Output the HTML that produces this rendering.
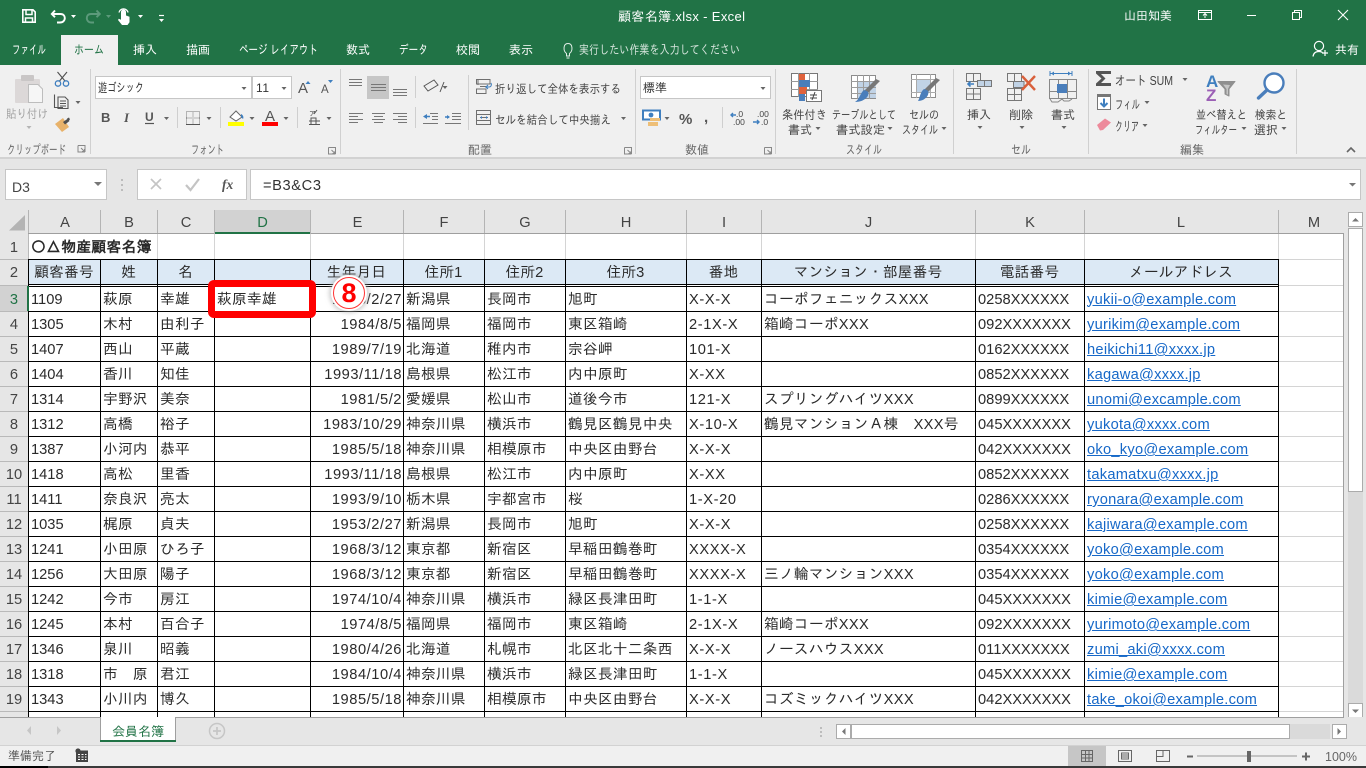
<!DOCTYPE html>
<html lang="ja"><head><meta charset="utf-8"><title>顧客名簿.xlsx - Excel</title>
<style>
html,body{margin:0;padding:0;width:1366px;height:768px;overflow:hidden;background:#e6e6e6}
body{position:relative;font-family:"Liberation Sans","IPAGothic","Noto Sans CJK JP",sans-serif}
svg{position:absolute;left:0;top:0;display:block}
svg text{font-family:"Liberation Sans","IPAGothic","Noto Sans CJK JP",sans-serif;font-size:12px;fill:#444}
#sheet{position:absolute;left:0;top:234px;width:1344px;height:483px;overflow:hidden;background:#fff}
#grid{left:0;top:-234px}
table{position:absolute;left:0;top:2px;border-collapse:collapse;table-layout:fixed;width:1344px;font-size:14.67px;color:#2a2a2a;letter-spacing:.3px}
td{padding:0 0 0 3px;height:25px;line-height:25px;white-space:nowrap;overflow:visible;box-sizing:border-box}
tr.h1 td{height:24px;line-height:23px}
tr.h2 td{height:27px;line-height:25px;text-align:center;padding:0;letter-spacing:.2px}
tr.h3 td{height:26px;line-height:25px}
td.r{text-align:center;padding:0;color:#444;letter-spacing:0}
tr.h3 td.r{padding:0}
td.s{color:#217346}
td.n{letter-spacing:0}
td.d{text-align:right;padding:0 1px 0 0;letter-spacing:.55px}
td.t{letter-spacing:0}
td.m{color:#1668c8;letter-spacing:.25px}
td.m span{text-decoration:underline}
td.x{letter-spacing:.6px}
b{font-weight:bold;letter-spacing:.45px}
#red{position:absolute;left:208px;top:280px;width:94px;height:24px;border:7px solid #f00;border-radius:6px;background:transparent;box-sizing:content-box}
#eight{position:absolute;left:331px;top:275px;width:36px;height:36px;border-radius:50%;background:#fff;box-shadow:0 0 4px 2px rgba(170,170,170,.55)}
#eight i{position:absolute;left:2px;top:2px;width:30px;height:30px;border:1px solid #f33;border-radius:50%;font:bold 27px/31px "Liberation Sans",sans-serif;color:#f00;text-align:center}
</style></head><body>

<div id="sheet">
<svg id="grid" width="1344" height="768">
<rect x="0" y="234" width="28" height="483" fill="#e6e6e6"/>
<rect x="0" y="286" width="28" height="25" fill="#d2d2d2"/>
<rect x="29" y="260" width="1249" height="24" fill="#dce9f5"/>
<path d="M157.5 234V259M214.5 234V259M310.5 234V259M403.5 234V259M484.5 234V259M565.5 234V259M686.5 234V259M761.5 234V259M975.5 234V259M1084.5 234V259M1278.5 234V259M1279 259.5H1344M1279 285.5H1344M1279 311.5H1344M1279 336.5H1344M1279 361.5H1344M1279 386.5H1344M1279 411.5H1344M1279 436.5H1344M1279 461.5H1344M1279 486.5H1344M1279 511.5H1344M1279 536.5H1344M1279 561.5H1344M1279 586.5H1344M1279 611.5H1344M1279 636.5H1344M1279 661.5H1344M1279 686.5H1344M1279 711.5H1344" stroke="#d4d4d4" fill="none"/>
</svg>
<table>
<colgroup><col style="width:28px"><col style="width:72px"><col style="width:57px"><col style="width:57px"><col style="width:96px"><col style="width:93px"><col style="width:81px"><col style="width:81px"><col style="width:121px"><col style="width:75px"><col style="width:214px"><col style="width:109px"><col style="width:194px"><col style="width:66px"></colgroup>
<tr class="h1"><td class="r">1</td><td colspan="3"><b>〇△物産顧客名簿</b></td><td></td><td></td><td></td><td></td><td></td><td></td><td></td><td></td><td></td><td></td></tr>
<tr class="h2"><td class="r">2</td><td>顧客番号</td><td>姓</td><td>名</td><td></td><td>生年月日</td><td>住所1</td><td>住所2</td><td>住所3</td><td>番地</td><td>マンション・部屋番号</td><td>電話番号</td><td>メールアドレス</td><td></td></tr>
<tr class="h3"><td class="r s">3</td><td class="n">1109</td><td>萩原</td><td>幸雄</td><td>萩原幸雄</td><td class="d">1953/2/27</td><td>新潟県</td><td>長岡市</td><td>旭町</td><td class="x">X-X-X</td><td>コーポフェニックスXXX</td><td class="t">0258XXXXXX</td><td class="m"><span>yukii-o@example.com</span></td><td></td></tr>
<tr><td class="r">4</td><td class="n">1305</td><td>木村</td><td>由利子</td><td></td><td class="d">1984/8/5</td><td>福岡県</td><td>福岡市</td><td>東区箱崎</td><td class="x">2-1X-X</td><td>箱崎コーポXXX</td><td class="t">092XXXXXXX</td><td class="m"><span>yurikim@example.com</span></td><td></td></tr>
<tr><td class="r">5</td><td class="n">1407</td><td>西山</td><td>平蔵</td><td></td><td class="d">1989/7/19</td><td>北海道</td><td>稚内市</td><td>宗谷岬</td><td class="x">101-X</td><td></td><td class="t">0162XXXXXX</td><td class="m"><span>heikichi11@xxxx.jp</span></td><td></td></tr>
<tr><td class="r">6</td><td class="n">1404</td><td>香川</td><td>知佳</td><td></td><td class="d">1993/11/18</td><td>島根県</td><td>松江市</td><td>内中原町</td><td class="x">X-XX</td><td></td><td class="t">0852XXXXXX</td><td class="m"><span>kagawa@xxxx.jp</span></td><td></td></tr>
<tr><td class="r">7</td><td class="n">1314</td><td>宇野沢</td><td>美奈</td><td></td><td class="d">1981/5/2</td><td>愛媛県</td><td>松山市</td><td>道後今市</td><td class="x">121-X</td><td>スプリングハイツXXX</td><td class="t">0899XXXXXX</td><td class="m"><span>unomi@excample.com</span></td><td></td></tr>
<tr><td class="r">8</td><td class="n">1312</td><td>高橋</td><td>裕子</td><td></td><td class="d">1983/10/29</td><td>神奈川県</td><td>横浜市</td><td>鶴見区鶴見中央</td><td class="x">X-10-X</td><td>鶴見マンションＡ棟　XXX号</td><td class="t">045XXXXXXX</td><td class="m"><span>yukota@xxxx.com</span></td><td></td></tr>
<tr><td class="r">9</td><td class="n">1387</td><td>小河内</td><td>恭平</td><td></td><td class="d">1985/5/18</td><td>神奈川県</td><td>相模原市</td><td>中央区由野台</td><td class="x">X-X-X</td><td></td><td class="t">042XXXXXXX</td><td class="m"><span>oko_kyo@example.com</span></td><td></td></tr>
<tr><td class="r">10</td><td class="n">1418</td><td>高松</td><td>里香</td><td></td><td class="d">1993/11/18</td><td>島根県</td><td>松江市</td><td>内中原町</td><td class="x">X-XX</td><td></td><td class="t">0852XXXXXX</td><td class="m"><span>takamatxu@xxxx.jp</span></td><td></td></tr>
<tr><td class="r">11</td><td class="n">1411</td><td>奈良沢</td><td>亮太</td><td></td><td class="d">1993/9/10</td><td>栃木県</td><td>宇都宮市</td><td>桜</td><td class="x">1-X-20</td><td></td><td class="t">0286XXXXXX</td><td class="m"><span>ryonara@example.com</span></td><td></td></tr>
<tr><td class="r">12</td><td class="n">1035</td><td>梶原</td><td>貞夫</td><td></td><td class="d">1953/2/27</td><td>新潟県</td><td>長岡市</td><td>旭町</td><td class="x">X-X-X</td><td></td><td class="t">0258XXXXXX</td><td class="m"><span>kajiwara@example.com</span></td><td></td></tr>
<tr><td class="r">13</td><td class="n">1241</td><td>小田原</td><td>ひろ子</td><td></td><td class="d">1968/3/12</td><td>東京都</td><td>新宿区</td><td>早稲田鶴巻町</td><td class="x">XXXX-X</td><td></td><td class="t">0354XXXXXX</td><td class="m"><span>yoko@example.com</span></td><td></td></tr>
<tr><td class="r">14</td><td class="n">1256</td><td>大田原</td><td>陽子</td><td></td><td class="d">1968/3/12</td><td>東京都</td><td>新宿区</td><td>早稲田鶴巻町</td><td class="x">XXXX-X</td><td>三ノ輪マンションXXX</td><td class="t">0354XXXXXX</td><td class="m"><span>yoko@example.com</span></td><td></td></tr>
<tr><td class="r">15</td><td class="n">1242</td><td>今市</td><td>房江</td><td></td><td class="d">1974/10/4</td><td>神奈川県</td><td>横浜市</td><td>緑区長津田町</td><td class="x">1-1-X</td><td></td><td class="t">045XXXXXXX</td><td class="m"><span>kimie@example.com</span></td><td></td></tr>
<tr><td class="r">16</td><td class="n">1245</td><td>本村</td><td>百合子</td><td></td><td class="d">1974/8/5</td><td>福岡県</td><td>福岡市</td><td>東区箱崎</td><td class="x">2-1X-X</td><td>箱崎コーポXXX</td><td class="t">092XXXXXXX</td><td class="m"><span>yurimoto@example.com</span></td><td></td></tr>
<tr><td class="r">17</td><td class="n">1346</td><td>泉川</td><td>昭義</td><td></td><td class="d">1980/4/26</td><td>北海道</td><td>札幌市</td><td>北区北十二条西</td><td class="x">X-X-X</td><td>ノースハウスXXX</td><td class="t">011XXXXXXX</td><td class="m"><span>zumi_aki@xxxx.com</span></td><td></td></tr>
<tr><td class="r">18</td><td class="n">1318</td><td>市　原</td><td>君江</td><td></td><td class="d">1984/10/4</td><td>神奈川県</td><td>横浜市</td><td>緑区長津田町</td><td class="x">1-1-X</td><td></td><td class="t">045XXXXXXX</td><td class="m"><span>kimie@example.com</span></td><td></td></tr>
<tr><td class="r">19</td><td class="n">1343</td><td>小川内</td><td>博久</td><td></td><td class="d">1985/5/18</td><td>神奈川県</td><td>相模原市</td><td>中央区由野台</td><td class="x">X-X-X</td><td>コズミックハイツXXX</td><td class="t">042XXXXXXX</td><td class="m"><span>take_okoi@example.com</span></td><td></td></tr>
</table>
<svg width="1344" height="483" viewBox="0 234 1344 483">
<path d="M28.5 259V717M100.5 259V717M157.5 259V717M214.5 259V717M310.5 259V717M403.5 259V717M484.5 259V717M565.5 259V717M686.5 259V717M761.5 259V717M975.5 259V717M1084.5 259V717M1278.5 259V717M28 259.5H1279M28 284.5H1279M28 286.5H1279M28 311.5H1279M28 336.5H1279M28 361.5H1279M28 386.5H1279M28 411.5H1279M28 436.5H1279M28 461.5H1279M28 486.5H1279M28 511.5H1279M28 536.5H1279M28 561.5H1279M28 586.5H1279M28 611.5H1279M28 636.5H1279M28 661.5H1279M28 686.5H1279M28 711.5H1279" stroke="#000" fill="none"/>
<path d="M0 259.5H28M0 285.5H28M0 311.5H28M0 336.5H28M0 361.5H28M0 386.5H28M0 411.5H28M0 436.5H28M0 461.5H28M0 486.5H28M0 511.5H28M0 536.5H28M0 561.5H28M0 586.5H28M0 611.5H28M0 636.5H28M0 661.5H28M0 686.5H28M0 711.5H28M28.5 234V259" stroke="#b9b9b9" fill="none"/>
<rect x="27" y="286" width="2" height="25" fill="#217346"/>
<path d="M1343.5 234V717" stroke="#9f9f9f" fill="none"/>
</svg>
</div>

<div id="red"></div>
<div id="eight"><i>8</i></div>

<svg width="1366" height="768" viewBox="0 0 1366 768" style="pointer-events:none">
<!-- title + tabs -->
<rect width="1366" height="65" fill="#217346"/>
<rect x="61" y="35" width="57" height="30" fill="#f0f0f0"/>
<rect y="65" width="1366" height="93" fill="#f0f0f0"/>
<rect y="157" width="1366" height="2" fill="#d2d2d2"/>
<rect y="159" width="1366" height="51" fill="#e6e6e6"/>
<!-- QAT -->
<g fill="none" stroke="#fff" stroke-width="1.6">
<path d="M22.8 9.8H33L35.2 12V22.2H22.8Z"/>
<path d="M26 10V14.5H32V10M25.5 22V18H32.5V22" stroke-width="1.5"/>
<path d="M55 10.5L51.8 14L55 17.2M52.5 14H60.5C63.5 14 64.8 16 64.8 18C64.8 20.5 63 22.5 60 22.5H57" stroke-width="1.9"/>
<path d="M96.5 10.5L99.8 14L96.5 17.2M99 14H91C88 14 86.8 16 86.8 18C86.8 20.5 88.5 22.5 91.5 22.5H94" stroke="#5c9a7b" stroke-width="1.9"/>
</g>
<path d="M121 12a2.5 2.5 0 0 1 5 0v3.5l3.5 1.2v5.6l-2 2.7h-5.5l-4-5 .8-1.2 2.2 1z" fill="#fff"/>
<path d="M119 12.5a4.6 4.6 0 0 1 9 0" fill="none" stroke="#fff" stroke-width="1.3"/>
<path d="M71 15h5l-2.5 3zM138 15h5l-2.5 3zM159 19h5l-2.5 3z" fill="#fff"/>
<path d="M159 15.5h5" stroke="#fff" stroke-width="1.2"/>
<path d="M106 15h5l-2.5 3z" fill="#5c9a7b"/>
<!-- window controls -->
<g fill="none" stroke="#fff">
<path d="M1198.5 10.5H1211.5V19.5H1198.5ZM1198.5 12.5H1211.5M1205 18V14M1203 15.5L1205 13.5L1207 15.5"/>
<path d="M1247 15.5H1256"/>
<path d="M1292.5 12.5H1299.5V19.5H1292.5ZM1294.5 12.5V10.5H1301.5V17.5H1299.5"/>
<path d="M1338 10L1348 20M1348 10L1338 20" stroke-width="1.1"/>
<circle cx="1319" cy="46" r="4.6" stroke-width="1.2"/>
<path d="M1313 56.5C1313.5 53 1315.5 51.5 1319 51.5C1320.5 51.5 1321.5 51.8 1322.5 52.5M1325 50V56M1322 53H1328" stroke-width="1.2"/>
</g>
<text x="618" y="21" textLength="127" lengthAdjust="spacing" style="fill:#fff;font-size:13px">顧客名簿.xlsx  -  Excel</text>
<text x="1124" y="20" textLength="48" style="fill:#fff">山田知美</text>
<g style="fill:#fff">
<text x="12" y="54" textLength="34" lengthAdjust="spacingAndGlyphs" style="fill:#fff;font-size:12.5px">ファイル</text>
<text x="74" y="54" textLength="30" lengthAdjust="spacingAndGlyphs" style="fill:#217346;font-size:12.5px">ホーム</text>
<text x="133" y="54" textLength="24" style="fill:#fff">挿入</text>
<text x="186" y="54" textLength="24" style="fill:#fff">描画</text>
<text x="239" y="54" textLength="79" lengthAdjust="spacingAndGlyphs" style="fill:#fff;font-size:12.5px">ページ レイアウト</text>
<text x="346" y="54" textLength="24" style="fill:#fff">数式</text>
<text x="399" y="54" textLength="29" lengthAdjust="spacingAndGlyphs" style="fill:#fff;font-size:12.5px">データ</text>
<text x="456" y="54" textLength="24" style="fill:#fff">校閲</text>
<text x="509" y="54" textLength="24" style="fill:#fff">表示</text>
<text x="579" y="54" textLength="161" lengthAdjust="spacingAndGlyphs" style="fill:#d3e3da;font-size:12.5px">実行したい作業を入力してください</text>
<text x="1335" y="54" textLength="24" style="fill:#fff">共有</text>
</g>
<path d="M566.5 56V53.5C563 51 563 43.5 568 43.5C573 43.5 573 51 569.5 53.5V56ZM566.5 58H569.5" fill="none" stroke="#e3efe8" stroke-width="1"/>

<!-- group separators -->
<path d="M90.5 69V154M340.5 69V154M635.5 69V154M775.5 69V154M953.5 69V154M1088.5 69V154M1296.5 69V154M468.5 75V130" stroke="#d0d0d0" fill="none"/>
<path d="M177.5 107V128M220.5 107V128M297.5 107V128M415.5 76V98M415.5 107V128M722.5 107V128" stroke="#cfcfcf" fill="none"/>

<!-- clipboard -->
<rect x="15" y="79" width="25" height="24" rx="1" fill="#dcd8d8"/>
<rect x="21" y="75" width="13" height="6" rx="1" fill="#c9c6c6"/>
<path d="M28.5 84.5H38L42.5 89V102.5H28.5Z" fill="#f6f6f6" stroke="#bdbdbd"/>
<g fill="none" stroke="#4f4f4f" stroke-width="1.1">
<path d="M57.5 72L65 81M67 72L59.5 81"/>
<path d="M54.5 94.5V107.5H63M58 97V108.5H68V100L65 97Z" stroke="#555"/>
<path d="M60 101H66M60 103.5H66M60 106H66" stroke="#555"/>
</g>
<circle cx="58" cy="83.5" r="2.7" fill="none" stroke="#3f7fbf" stroke-width="1.3"/>
<circle cx="66" cy="83.5" r="2.7" fill="none" stroke="#3f7fbf" stroke-width="1.3"/>
<path d="M55 124L63 118L69 127L62 132Z" fill="#e8b26a"/>
<path d="M63 122L68 118.5L69.5 121L65 124.5ZM67 118.5L69 117.5L70 119.5L68.5 120.5Z" fill="#505050"/>
<text x="6" y="118" textLength="42" lengthAdjust="spacingAndGlyphs" style="fill:#a3a3a3">貼り付け</text>
<text x="7" y="154" textLength="59" lengthAdjust="spacingAndGlyphs" style="fill:#666;font-size:12.5px">クリップボード</text>
<text x="191" y="154" textLength="33" lengthAdjust="spacingAndGlyphs" style="fill:#666;font-size:12.5px">フォント</text>
<text x="468" y="154" textLength="24" style="fill:#666">配置</text>
<text x="685" y="154" textLength="24" style="fill:#666">数値</text>
<text x="846" y="154" textLength="36" lengthAdjust="spacingAndGlyphs" style="fill:#666;font-size:12.5px">スタイル</text>
<text x="1011" y="154" textLength="20" lengthAdjust="spacingAndGlyphs" style="fill:#666;font-size:12.5px">セル</text>
<text x="1180" y="154" textLength="24" style="fill:#666">編集</text>

<!-- font boxes -->
<g fill="#fff" stroke="#c6c6c6">
<rect x="95.5" y="76.5" width="156" height="22"/>
<rect x="252.5" y="76.5" width="39" height="22"/>
<rect x="640.5" y="76.5" width="130" height="22"/>
</g>
<text x="98" y="92" textLength="46" lengthAdjust="spacingAndGlyphs" style="fill:#333;font-size:12.5px">遊ゴシック</text>
<text x="256" y="92" textLength="13" style="fill:#333">11</text>
<text x="643" y="92" textLength="24" style="fill:#333">標準</text>
<text x="298" y="93" style="font-size:15px;fill:#555">A</text>
<text x="321" y="93" style="font-size:11.5px;fill:#555">A</text>
<path d="M305.5 84h5l-2.5-3zM328 80h5l-2.5 3z" fill="#3f7fbf"/>
<text x="101" y="122" style="font-weight:bold;font-size:13px;fill:#555">B</text>
<text x="124" y="122" style="font-family:'Liberation Serif';font-style:italic;font-weight:bold;font-size:13px;fill:#555">I</text>
<text x="145" y="121" style="font-weight:bold;font-size:12px;fill:#555">U</text>
<path d="M145 123.5h9" stroke="#555" stroke-width="1.2"/>
<path d="M186.5 111.5H199.5V124.5H186.5ZM193 111.5V124.5M186.5 118H199.5" fill="none" stroke="#777" stroke-width="1" stroke-dasharray="1 1"/>
<path d="M186 124.5H200" stroke="#555"/>
<path d="M230 117L236 111L242 117L236 121Z" fill="#fff" stroke="#666"/>
<path d="M241 114c2 1 3 3 2 5l-2-2z" fill="#3f7fbf"/>
<rect x="228" y="122" width="16" height="4" fill="#ff0"/>
<text x="265" y="121" style="font-size:15px;fill:#555">A</text>
<rect x="262" y="122" width="16" height="4" fill="#f00"/>
<text x="309" y="116" style="font-size:7px;fill:#444">ア</text>
<path d="M311 124v-6h5v6M316 118v6M309 121h11M309 124.5h11M317 110l-3 4" fill="none" stroke="#555"/>

<!-- alignment -->
<g fill="none" stroke="#777">
<rect x="367" y="76" width="22" height="23" fill="#c6c6c6" stroke="none"/>
<path d="M349 79.5H362M349 82.5H362M349 85.5H362M371 84.5H386M371 87.5H386M371 90.5H386M393 89.5H407M393 92.5H407M393 95.5H407"/>
<path d="M349 113.5H363M349 116.5H358M349 119.5H363M349 122.5H358M372 113.5H385M374 116.5H383M372 119.5H385M374 122.5H383M393 113.5H407M398 116.5H407M393 119.5H407M398 122.5H407"/>
<path d="M430 113.5H438M432 116.5H438M432 119.5H438M423 123.5H438M452 113.5H461M452 116.5H461M452 119.5H461M445 123.5H461"/>
<path d="M424 86L434 80L438 85L428 91ZM440 92L444 82" stroke="#555"/>
<path d="M478 79.5H489M478 79.5V85M476.5 79.5H490V84H476.5ZM476.5 89H486V93.5H476.5ZM480 86.5H486" stroke="#6f6f6f"/>
<path d="M476.5 110.5H490.5V124.5H476.5ZM476.5 114.5H490.5M476.5 120.5H490.5M480 117.5H488" stroke="#6f6f6f"/>
</g>
<path d="M423 116.5l4-2.5v5zM447 119l3-2-3-2zM480 117.5l2-1.5v3zM488 117.5l-2-1.5v3z" fill="#3f7fbf"/>
<path d="M430 116.5h-4M445 117h4" stroke="#3f7fbf" stroke-width="1.5"/>
<path d="M491 83c1 2 0 4-2 4h-3l2-2m-2 2l2 2" fill="none" stroke="#3f7fbf"/>
<text x="495" y="93" textLength="126" lengthAdjust="spacingAndGlyphs">折り返して全体を表示する</text>
<text x="495" y="124" textLength="116" lengthAdjust="spacingAndGlyphs">セルを結合して中央揃え</text>

<!-- number -->
<rect x="643" y="110.5" width="17" height="9" fill="#fff" stroke="#3f7fbf" stroke-width="2"/>
<circle cx="651" cy="115" r="2.4" fill="#3f7fbf"/>
<path d="M650 118h10v3h-10zM648 122h10v4h-10z" fill="#eebf77"/>
<text x="679" y="124" style="font-size:15px;font-weight:bold;fill:#555">%</text>
<text x="704" y="122" style="font-size:15px;font-weight:bold;fill:#555">,</text>
<text x="736" y="117" style="font-size:8.5px;fill:#444">.0</text>
<text x="733" y="125" style="font-size:8.5px;fill:#444">.00</text>
<text x="757" y="117" style="font-size:8.5px;fill:#444">.00</text>
<text x="761" y="125" style="font-size:8.5px;fill:#444">.0</text>
<path d="M736 115h-5M733 113l-2 2 2 2M753 122h6M757 120l2 2-2 2" fill="none" stroke="#3f7fbf" stroke-width="1.4"/>

<!-- styles: conditional -->
<rect x="791.5" y="73.5" width="26" height="23" fill="#fff" stroke="#777"/>
<path d="M791 81.5H818M791 89.5H818M798.5 73V97M809.5 73V97" stroke="#999" fill="none"/>
<rect x="799" y="74" width="6" height="7" fill="#e0623c"/>
<rect x="799" y="80" width="11" height="7" fill="#4a7ebb"/>
<rect x="799" y="87" width="8" height="7" fill="#e0623c"/>
<rect x="799" y="94" width="6" height="7" fill="#4a7ebb"/>
<rect x="806.5" y="90.5" width="15" height="11" fill="#fff" stroke="#777"/>
<path d="M810 95h7M810 98h7M812 100l3-8" stroke="#444" fill="none"/>
<!-- table -->
<rect x="851.5" y="75.5" width="24" height="23" fill="#fff" stroke="#8c8c8c"/>
<rect x="858" y="82" width="18" height="16" fill="#c1d3e6"/>
<path d="M851 81.5H876M851 87.5H876M851 93.5H876M857.5 75V99M863.5 75V99M869.5 75V99" stroke="#9c9c9c" fill="none"/>
<path d="M868 93L880 81L876 79L864 91Z" fill="#777"/>
<path d="M867 91C871 94 866 102 855 102C860 99 860 93 864 90Z" fill="#4a7ebb"/>
<!-- cell style -->
<rect x="911.5" y="74.5" width="24" height="23" fill="#fff" stroke="#8c8c8c"/>
<rect x="916" y="79" width="15" height="14" fill="#c1d3e6"/>
<path d="M911 79.5H936M911 92.5H936M916.5 74V98M930.5 74V98" stroke="#aaa" fill="none"/>
<path d="M928 92L940 80L936 78L924 90Z" fill="#777"/>
<path d="M927 90C931 93 926 101 918 101C920 98 920 92 924 89Z" fill="#4a7ebb"/>
<g style="fill:#444">
<text x="782" y="119" textLength="45" lengthAdjust="spacingAndGlyphs">条件付き</text>
<text x="788" y="134" textLength="24">書式</text>
<text x="832" y="119" textLength="64" lengthAdjust="spacingAndGlyphs">テーブルとして</text>
<text x="836" y="134" textLength="49" lengthAdjust="spacingAndGlyphs">書式設定</text>
<text x="909" y="119" textLength="30" lengthAdjust="spacingAndGlyphs">セルの</text>
<text x="902" y="134" textLength="36" lengthAdjust="spacingAndGlyphs">スタイル</text>
<text x="967" y="119" textLength="24">挿入</text>
<text x="1009" y="119" textLength="24">削除</text>
<text x="1051" y="119" textLength="24">書式</text>
<text x="1115" y="85" textLength="58" lengthAdjust="spacingAndGlyphs" style="font-size:13px">オート SUM</text>
<text x="1115" y="109" textLength="25" lengthAdjust="spacingAndGlyphs" style="font-size:13px">フィル</text>
<text x="1115" y="131" textLength="24" lengthAdjust="spacingAndGlyphs" style="font-size:13px">クリア</text>
<text x="1196" y="119" textLength="51" lengthAdjust="spacingAndGlyphs">並べ替えと</text>
<text x="1195" y="134" textLength="42" lengthAdjust="spacingAndGlyphs">フィルター</text>
<text x="1255" y="119" textLength="32" lengthAdjust="spacingAndGlyphs">検索と</text>
<text x="1254" y="134" textLength="24">選択</text>
</g>
<!-- cells: insert -->
<g fill="none" stroke="#777">
<path d="M966.5 73.5H980.5V81.5H966.5ZM973.5 73.5V81.5M966.5 88.5H980.5V99.5H966.5ZM973.5 88.5V99.5M966.5 94H980.5"/>
<path d="M977.5 80.5H991.5V86.5H977.5ZM984.5 80.5V86.5" fill="#c1d3e6"/>
<path d="M1007.5 73.5H1021.5V81.5H1007.5ZM1014.5 73.5V81.5M1007.5 88.5H1021.5V100.5H1007.5ZM1014.5 88.5V100.5M1007.5 94.5H1021.5"/>
<path d="M1013.5 81.5H1024V87.5H1013.5Z" fill="#c1d3e6"/>
<path d="M1049.5 79.5H1076.5V98.5H1049.5ZM1058.5 79.5V98.5M1067.5 79.5V98.5M1049.5 91.5H1076.5" stroke="#888"/>
<path d="M1050 99L1052 102H1058L1062 99M1062 99L1064 101H1069L1072 99" stroke="#888"/>
</g>
<path d="M968 84h6M970.5 81.5L968 84l2.5 2.5" fill="none" stroke="#3f7fbf" stroke-width="1.6"/>
<path d="M1022 76L1035 90M1035 76L1022 90" stroke="#d9603b" stroke-width="2.4"/>
<rect x="1057" y="84" width="10" height="9" fill="#4a7ebb"/>
<path d="M1050 73.5H1072M1050 71V76M1072 71V76" stroke="#3f7fbf" fill="none"/>
<path d="M1051 73.5l3-2v4zM1071 73.5l-3-2v4z" fill="#3f7fbf"/>
<!-- editing -->
<path d="M1096 71H1111V74H1101L1105.5 78.5L1101 83H1111V86H1096V83.5L1101.5 78.5L1096 73.5Z" fill="#555"/>
<rect x="1097.5" y="94.5" width="13" height="15" fill="#fff" stroke="#777"/>
<rect x="1097" y="94" width="14" height="3" fill="#777"/>
<path d="M1104 98.5V106M1100.5 103L1104 106.5L1107.5 103" fill="none" stroke="#3f7fbf" stroke-width="2"/>
<path d="M1097 125L1105 118.5L1111 122.5L1103 130L1100 130.5Z" fill="#ed8a9b"/>
<text x="1206" y="87" style="font-size:17px;font-weight:bold;fill:#3f7fbf">A</text>
<text x="1206" y="101" style="font-size:17px;font-weight:bold;fill:#9b5fb5">Z</text>
<path d="M1218 81.5H1235L1229 89V96L1225 94V89Z" fill="#8f8f8f" stroke="#8f8f8f" stroke-linejoin="round"/>
<path d="M1223 84.5L1226.5 89V94L1228 94.8V89L1230 85Z" fill="#c6c6c6"/>
<circle cx="1274" cy="83" r="9.5" fill="#fff" stroke="#4a7ebb" stroke-width="2.4"/>
<path d="M1267 90L1258.5 98" stroke="#4a7ebb" stroke-width="3.4" stroke-linecap="round"/>
<!-- dropdowns -->
<path d="M241.5 87h5l-2.5 3zM281.5 87h5l-2.5 3zM75.5 101h5l-2.5 3zM164 117h5l-2.5 3zM206.5 117h5l-2.5 3zM249.5 117h5l-2.5 3zM283.5 117h5l-2.5 3zM326.5 117h5l-2.5 3zM442.5 86h5l-2.5 3zM621 117h5l-2.5 3zM760.5 87h5l-2.5 3zM664.5 117h5l-2.5 3zM815.5 127h5l-2.5 3zM887.5 127h5l-2.5 3zM941.5 127h5l-2.5 3zM977.5 126h5l-2.5 3zM1019.5 126h5l-2.5 3zM1061.5 126h5l-2.5 3zM1182.5 78h5l-2.5 3zM1144.5 101h5l-2.5 3zM1142.5 124h5l-2.5 3zM1241.5 127h5l-2.5 3zM1281.5 127h5l-2.5 3z" fill="#666"/>
<path d="M26.5 126h5l-2.5 3z" fill="#b5b5b5"/>
<path d="M1347 152L1351 148L1355 152" fill="none" stroke="#666" stroke-width="1.6"/>
<!-- launchers -->
<path d="M79 148.5H86V155M79 148.5V155H86M82 151L85.5 154.5M85.5 152V154.5H83" fill="none" stroke="#888" transform="translate(-1 -3)"/>
<path d="M329.5 148.5H336.5V155M329.5 148.5V155H336.5M332.5 151L336 154.5M336 152V154.5H333.5" fill="none" stroke="#888" transform="translate(-1 -1)"/>
<path d="M624.5 148.5H631.5V155M624.5 148.5V155H631.5M627.5 151L631 154.5M631 152V154.5H628.5" fill="none" stroke="#888" transform="translate(0 -1)"/>
<path d="M764.5 148.5H771.5V155M764.5 148.5V155H771.5M767.5 151L771 154.5M771 152V154.5H768.5" fill="none" stroke="#888" transform="translate(0 -1)"/>

<!-- formula bar -->
<rect x="5.5" y="169.5" width="101" height="30" fill="#fff" stroke="#c6c6c6"/>
<rect x="137.5" y="169.5" width="109" height="30" fill="#fff" stroke="#c6c6c6"/>
<rect x="250.5" y="169.5" width="1110" height="30" fill="#fff" stroke="#c6c6c6"/>
<text x="12" y="192" style="font-size:14px;fill:#444">D3</text>
<path d="M94 182h8l-4 4zM1349 183h7l-3.5 3.5z" fill="#777"/>
<path d="M122 179v2M122 184v2M122 189v2" stroke="#aaa" stroke-width="1.4"/>
<path d="M151 179L161 189M161 179L151 189" stroke="#c4c4c4" stroke-width="1.7"/>
<path d="M186 185L190.5 190L199 179" fill="none" stroke="#c4c4c4" stroke-width="2.2"/>
<text x="222" y="189" style="font-family:'Liberation Serif';font-style:italic;font-weight:bold;font-size:13.5px;fill:#555">fx</text>
<text x="263" y="190" textLength="58" lengthAdjust="spacing" style="font-size:14.67px;fill:#333">=B3&amp;C3</text>

<!-- column headers -->
<rect y="210" width="1344" height="24" fill="#e6e6e6"/>
<path d="M25 215V230.5H9Z" fill="#b4b4b4"/>
<rect x="215" y="210" width="95" height="24" fill="#d2d2d2"/>
<rect x="214" y="232" width="97" height="2" fill="#217346"/>
<path d="M28.5 210V234M100.5 210V234M157.5 210V234M214.5 210V234M310.5 210V234M403.5 210V234M484.5 210V234M565.5 210V234M686.5 210V234M761.5 210V234M975.5 210V234M1084.5 210V234M1278.5 210V234" stroke="#b4b4b4" fill="none"/>
<path d="M28 233.5H214M311 233.5H1344" stroke="#9f9f9f" fill="none"/>
<g text-anchor="middle">
<text x="65" y="227" style="font-size:14.67px">A</text><text x="129" y="227" style="font-size:14.67px">B</text><text x="186" y="227" style="font-size:14.67px">C</text><text x="262.5" y="227" style="font-size:14.67px;fill:#217346">D</text><text x="357.5" y="227" style="font-size:14.67px">E</text><text x="444" y="227" style="font-size:14.67px">F</text><text x="525" y="227" style="font-size:14.67px">G</text><text x="626" y="227" style="font-size:14.67px">H</text><text x="724" y="227" style="font-size:14.67px">I</text><text x="868.5" y="227" style="font-size:14.67px">J</text><text x="1030" y="227" style="font-size:14.67px">K</text><text x="1181" y="227" style="font-size:14.67px">L</text><text x="1314" y="227" style="font-size:14.67px">M</text>
</g>

<!-- vertical scrollbar -->
<rect x="1344" y="210" width="22" height="508" fill="#e6e6e6"/>
<rect x="1348" y="228" width="15" height="476" fill="#dadada"/>
<rect x="1348.5" y="228.5" width="14" height="263" fill="#fff" stroke="#ababab"/>
<rect x="1348.5" y="212.5" width="14" height="14" fill="#fff" stroke="#ababab"/>
<rect x="1348.5" y="703.5" width="14" height="14" fill="#fff" stroke="#ababab"/>
<path d="M1352 221.5h7l-3.5-3.5zM1352 709.5h7l-3.5 3.5z" fill="#777"/>

<!-- sheet tabs -->
<rect y="717" width="1366" height="29" fill="#e6e6e6"/>
<path d="M0 717.5H1344" stroke="#9f9f9f"/>
<rect x="100" y="717" width="76" height="29" fill="#fff"/>
<path d="M100.5 717V744M175.5 717V744" stroke="#9f9f9f"/>
<rect x="100" y="740" width="76" height="2" fill="#217346"/>
<rect x="100" y="742" width="76" height="4" fill="#e6e6e6"/>
<text x="112" y="736" textLength="52" style="font-size:13px;fill:#217346">会員名簿</text>
<path d="M31 726v9l-4-4.5zM57 726v9l4-4.5z" fill="#c6c6c6"/>
<circle cx="217" cy="731" r="7.5" fill="none" stroke="#c6c6c6" stroke-width="1.5"/>
<path d="M217 727v8M213 731h8" stroke="#c6c6c6" stroke-width="1.7"/>
<path d="M821 727v2M821 731v2M821 735v2" stroke="#aaa" stroke-width="1.4"/>
<!-- horizontal scrollbar -->
<rect x="836.5" y="724.5" width="14" height="14" fill="#fff" stroke="#ababab"/>
<path d="M845.5 728v7l-3.5-3.5z" fill="#777"/>
<rect x="851" y="724" width="479" height="15" fill="#dadada"/>
<rect x="851.5" y="724.5" width="438" height="14" fill="#fff" stroke="#ababab"/>
<rect x="1332.5" y="724.5" width="14" height="14" fill="#fff" stroke="#ababab"/>
<path d="M1337.5 728v7l3.5-3.5z" fill="#777"/>

<!-- status -->
<rect y="745" width="1366" height="21" fill="#f0f0f0"/>
<path d="M0 745.5H1366" stroke="#d2d2d2"/>
<rect y="766" width="1366" height="2" fill="#3a3a3a"/>
<rect y="766" width="48" height="2" fill="#000"/>
<text x="8" y="760" textLength="48" style="fill:#555">準備完了</text>
<circle cx="78" cy="751" r="2.6" fill="#444"/>
<path d="M76 750.5H88V762H76Z" fill="#444"/>
<path d="M78 754.5h2M81.5 754.5h2M85 754.5h1.5M78 757h2M81.5 757h2M85 757h1.5M78 759.5h2M81.5 759.5h2M85 759.5h1.5" stroke="#fff"/>
<rect x="1068" y="746" width="38" height="20" fill="#c6c6c6"/>
<path d="M1081.5 750.5H1092.5V761.5H1081.5ZM1081.5 754.5H1092.5M1081.5 758H1092.5M1085.5 750.5V761.5M1089 750.5V761.5" fill="none" stroke="#666"/>
<path d="M1118.5 750.5H1131.5V761.5H1118.5ZM1121.5 753H1128.5V759H1121.5ZM1122 755H1128M1122 757H1128" fill="none" stroke="#666"/>
<path d="M1156.5 750.5H1169.5V761.5H1156.5ZM1163 750.5V756.5H1157" fill="none" stroke="#666"/>
<path d="M1197 756H1297" stroke="#999"/>
<rect x="1247" y="751" width="4" height="11" fill="#666"/>
<path d="M1187 756.5H1193" stroke="#666" stroke-width="2"/>
<path d="M1302 756.5H1310M1306 752.5V760.5" stroke="#666" stroke-width="2"/>
<text x="1325" y="761" style="font-size:12.5px;fill:#666">100%</text>
</svg>
</body></html>
